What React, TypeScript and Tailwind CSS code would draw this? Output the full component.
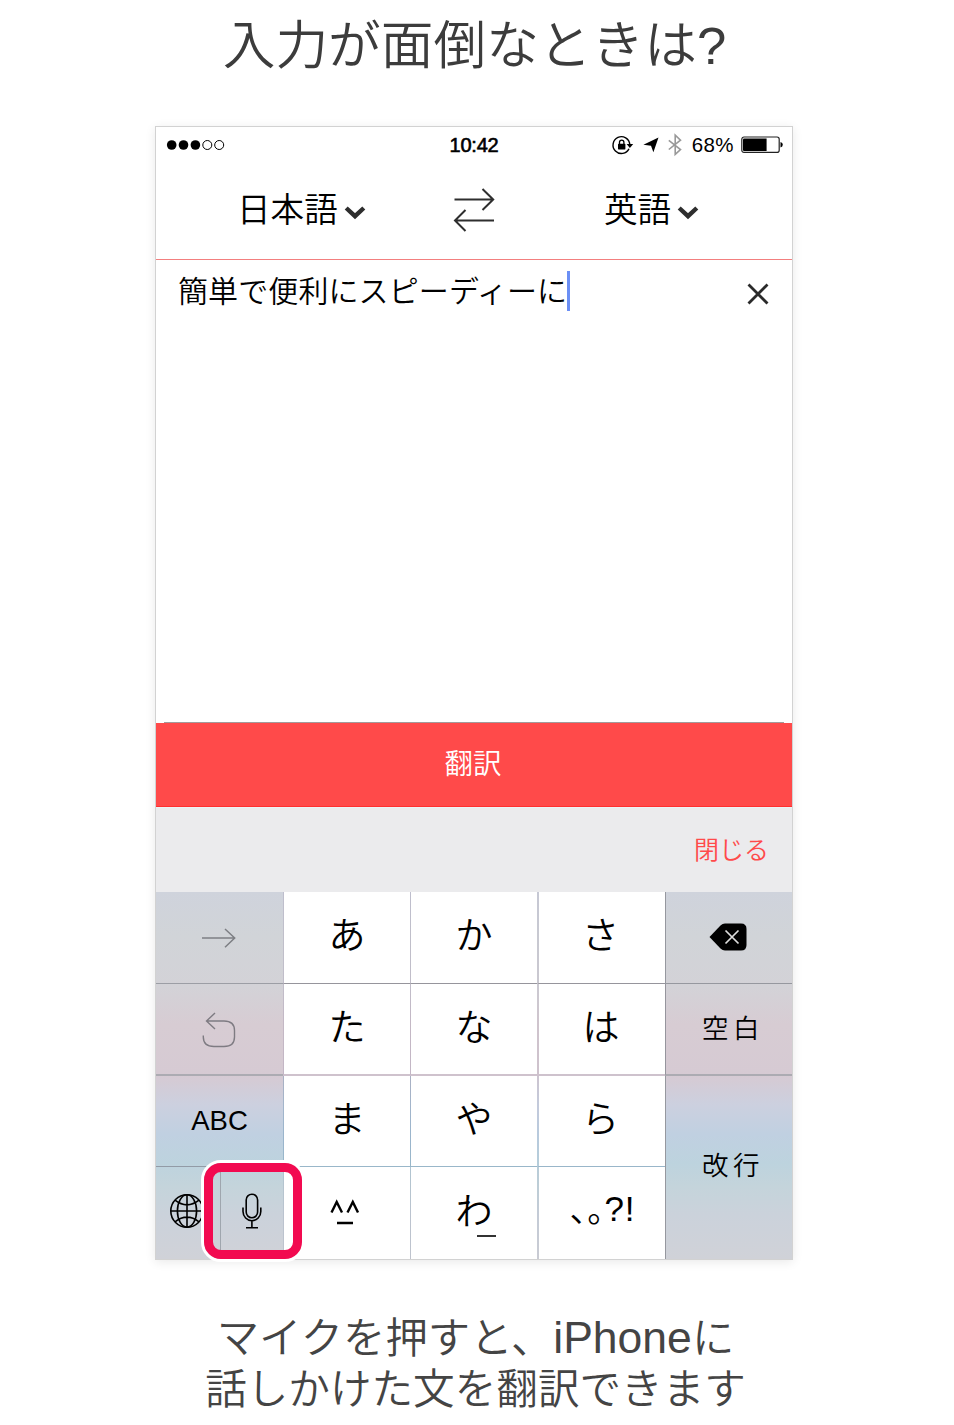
import React from "react";

const jp = "font-['Noto_Sans_CJK_JP',sans-serif] font-[350]";
const mixed = "font-['Liberation_Sans','Noto_Sans_CJK_JP',sans-serif]";

function StatusBar() {
  return (
    <div className="grid h-[38px] grid-cols-[1fr_auto_1fr] items-center pb-[2px] pl-[10px] pr-[9px] font-['Liberation_Sans',sans-serif] text-black">
      <svg width="60" height="12" viewBox="0 0 60 12">
        <g fill="#000">
          <circle cx="5.7" cy="6" r="4.8" />
          <circle cx="17.5" cy="6" r="4.8" />
          <circle cx="29.4" cy="6" r="4.8" />
        </g>
        <g fill="none" stroke="#000" strokeWidth="1">
          <circle cx="41.3" cy="6" r="4.5" />
          <circle cx="53.2" cy="6" r="4.5" />
        </g>
      </svg>
      <span className="pr-px text-[20px] leading-none tracking-[-0.2px] [-webkit-text-stroke:0.6px_#000]">10:42</span>
      <div className="flex items-center justify-end">
        <svg width="80" height="24" viewBox="0 0 80 24" className="mr-px">
          <path d="M18 15.7A8.4 8.4 0 1 1 18.8 11.4" fill="none" stroke="#000" strokeWidth="1.4" />
          <path d="M15.6 11h6.6l-3.3 4z" fill="#000" />
          <rect x="7" y="10.8" width="7.4" height="5.6" rx="0.6" fill="#000" />
          <path d="M8.5 11V9.3a2.2 2.2 0 0 1 4.4 0V11" fill="none" stroke="#000" strokeWidth="1.3" />
          <path d="M47.5 4.6L42.4 19.3L40 12.8L32.4 11.7z" fill="#000" />
          <path d="M57.8 7.3L69.5 16.5L64.2 21.4V2.2L69.5 7.1L57.8 16.5" fill="none" stroke="#999" strokeWidth="1.6" />
        </svg>
        <span className="mr-[6px] text-[20.5px] leading-none tracking-[0.4px]">68%</span>
        <svg width="43" height="18" viewBox="0 0 43 18">
          <rect x="1.8" y="1" width="37.4" height="15.4" rx="2.2" fill="none" stroke="#222" strokeWidth="1.2" />
          <path d="M4 2.4H26.6V15H4Q3 15 3 14V3.4Q3 2.4 4 2.4z" fill="#000" />
          <path d="M40.5 6q2.3 0.6 2.3 2.7T40.5 11.4z" fill="#000" />
        </svg>
      </div>
    </div>
  );
}

function Chevron() {
  return (
    <svg width="22" height="15" viewBox="0 0 22 15" className="mt-[8px]">
      <path d="M2.2 3L11 11.2L19.8 3" fill="none" stroke="#2e2e2e" strokeWidth="4.4" />
    </svg>
  );
}

function Language({ name }: { name: string }) {
  return (
    <div className="flex items-center gap-[6px]">
      <span className={`${jp} text-[33.6px] leading-[40px] text-black`}>{name}</span>
      <Chevron />
    </div>
  );
}

function LanguageBar() {
  return (
    <div className="flex h-[95px] items-start border-b border-[#f37f7f] pl-[81px] pt-[23px]">
      <div className="w-[216px]">
        <Language name="日本語" />
      </div>
      <svg width="42" height="48" viewBox="0 0 42 48" className="-mt-[2px] mr-[109px]" fill="none" stroke="#2e2e2e" strokeWidth="2">
        <path d="M1.5 13.5H40M29.5 3L40.2 13.5L29.5 24" />
        <path d="M41 34.5H2.5M12.5 24L2 34.5L12.5 45" />
      </svg>
      <Language name="英語" />
    </div>
  );
}

function InputArea() {
  return (
    <div className="flex h-[462px] items-start justify-between pl-[22px] pr-[22px] pt-[11px]">
      <div className="flex">
        <span className={`${jp} -mt-[2px] text-[30px] leading-[40px] tracking-[0.1px] text-black`}>簡単で便利にスピーディーに</span>
        <span className="h-[40px] w-[3px] bg-[#6b8ff5]" />
      </div>
      <svg width="24" height="24" viewBox="0 0 24 24" className="mt-[11px]">
        <path d="M2.5 2.5L21.5 21.5M21.5 2.5L2.5 21.5" stroke="#2a2a2a" strokeWidth="2.8" />
      </svg>
    </div>
  );
}

const whiteKey = "flex items-center justify-center bg-white bg-clip-padding text-black";

function Kana({ text, line, className }: { text: string; line: string; className?: string }) {
  return (
    <div className={`${whiteKey} ${line}`}>
      <span className={`${jp} pb-[9px] text-[37px] leading-[40px] ${className ?? ""}`}>{text}</span>
    </div>
  );
}

const firstRow = "border-l border-b border-[#64508028] border-b-[#3c3c4666]";
const secondRow = "border-l border-b-2 border-[#64508028] border-b-[#64508010]";
const thirdRow = "border-l border-b border-[#4a78a050]";

function Keyboard() {
  return (
    <div className="grid h-[367px] grid-cols-[127px_127px_127px_128px_127px] grid-rows-[92px_92px_91px_92px] bg-[linear-gradient(180deg,#cfd3dc_0%,#d1d4d8_12%,#d3d2d7_26%,#d7ccd3_36%,#d6cad3_50%,#ccd0df_58%,#c0d0e1_66%,#bdd3de_74%,#c4d4db_80%,#cbd2db_88%,#d0d2d8_100%)]">
      <div className="flex items-center justify-center border-b border-[#9c9ea5] pr-[2px]">
        <svg width="36" height="22" viewBox="0 0 36 22" fill="none" stroke="#7d7f84" strokeWidth="1.5">
          <path d="M1 11H33.5M24 2L33.7 11L24 20.2" />
        </svg>
      </div>
      <Kana text="あ" line={firstRow} />
      <Kana text="か" line={firstRow} />
      <Kana text="さ" line="border-l-2 border-b border-[#64508014] border-b-[#3c3c4666]" className="pr-[3px]" />
      <div className="flex items-center justify-center border-b border-l border-[#96989f] pb-[2px] pr-[2px]">
        <svg width="38" height="28" viewBox="0 0 38 28">
          <path d="M0.5 14L11.5 2.5Q13.5 0.5 16 0.5H32Q37.5 0.5 37.5 6V22Q37.5 27.5 32 27.5H16Q13.5 27.5 11.5 25.5z" fill="#000" />
          <path d="M16.5 7.5L29.5 20.5M29.5 7.5L16.5 20.5" stroke="#ddd" strokeWidth="1.7" />
        </svg>
      </div>

      <div className="flex items-center justify-center border-b-2 border-[#acabb2] pr-[2px] pt-[2px]">
        <svg width="34" height="36" viewBox="0 0 34 36" fill="none" stroke="#7e7b82" strokeWidth="1.4">
          <path d="M13 1L4.5 9L13 17M4.5 9H22Q32.5 9 32.5 18.5V25Q32.5 34.5 22 34.5H12Q1.3 34.5 1.3 25V23.5" />
        </svg>
      </div>
      <Kana text="た" line={secondRow} />
      <Kana text="な" line={secondRow} />
      <Kana text="は" line="border-l-2 border-b-2 border-[#64508010]" className="pr-[2px]" />
      <div className="flex items-center justify-center border-b-2 border-l border-[#acabb2] border-l-[#96959d]">
        <span className={`${jp} pb-[5px] pl-[8px] text-[26.5px] leading-[36px] tracking-[4.5px] text-black`}>空白</span>
      </div>

      <div className="flex items-center justify-center border-b border-[#929ba6] pb-px">
        <span className="font-['Liberation_Sans',sans-serif] text-[27.5px] leading-[32px] text-black">ABC</span>
      </div>
      <Kana text="ま" line={thirdRow} />
      <Kana text="や" line={thirdRow} />
      <Kana text="ら" line="border-l-2 border-b border-[#4a78a010] border-b-[#4a78a050]" className="pr-[3px]" />
      <div className="row-span-2 flex items-center justify-center border-l border-[#96989f]">
        <span className={`${jp} pb-[8px] pl-[8px] text-[26.5px] leading-[36px] tracking-[4.5px] text-black`}>改行</span>
      </div>

      <div className="relative flex">
        <div className="flex w-[65px] items-center border-r border-[#9fa6ae] pb-[5px] pl-[14px]">
          <svg width="34" height="36" viewBox="0 0 34 36" fill="none" stroke="#000" strokeWidth="1.6">
            <circle cx="17" cy="18" r="16.2" />
            <ellipse cx="17" cy="18" rx="9.6" ry="16.2" />
            <path d="M17 2V34M1 18H33M5 7.2Q17 16.5 29 7.2M5 28.8Q17 19.5 29 28.8" />
          </svg>
        </div>
        <div className="flex flex-1 items-center justify-center pb-[5px]">
          <svg width="20" height="36" viewBox="0 0 20 36" fill="none" stroke="#000" strokeWidth="1.6">
            <rect x="4.2" y="1.2" width="11.4" height="23.6" rx="5.7" />
            <path d="M1 14.5V18.5A8.9 9.2 0 0 0 18.8 18.5V14.5M9.9 27.7V34.5M4 34.7H16" />
          </svg>
        </div>
        <div className="absolute left-[45px] top-[-7px] h-[102px] w-[104px] rounded-[20px] border-[3px] border-white">
          <div className="h-full w-full rounded-[17px] border-[9px] border-[#f20a50]" />
        </div>
      </div>
      <div className={`${whiteKey} border-l border-[#64709028]`}>
        <svg width="30" height="26" viewBox="0 0 30 26" fill="none" stroke="#000" strokeWidth="2.4" className="mb-[2px] mr-[5px]">
          <path d="M1.5 13.5L6.7 3L12 13.5M17.5 13.5L22.8 3L28 13.5M7 24H23" />
        </svg>
      </div>
      <div className={`${whiteKey} relative border-l border-[#64709028]`}>
        <span className={`${jp} pb-[9px] text-[37px] leading-[40px]`}>わ</span>
        <span className="absolute bottom-[22px] left-[66px] h-[2px] w-[19px] bg-[#333]" />
      </div>
      <div className={`${whiteKey} border-l-2 border-[#64709010]`}>
        <span className={`${jp} flex pb-[9px] pl-[2px] text-[34px] leading-[40px]`}>
          <span>､｡</span>
          <span className="font-['Liberation_Sans',sans-serif] pt-px text-[35px] tracking-[1px] font-normal">?!</span>
        </span>
      </div>
    </div>
  );
}

export default function App() {
  return (
    <main className="flex h-[1425px] w-[954px] flex-col items-center overflow-hidden bg-white">
      <h1 className={`${mixed} h-[126px] pr-[5px] pt-[16px] text-[52.7px] font-[350] leading-[60px] text-[#3c3c3c]`}>入力が面倒なときは?</h1>
      <section className="mr-[6px] h-[1134px] w-[638px] shrink-0 border border-[#d2d2d2] bg-white shadow-[0_2px_10px_rgba(0,0,0,0.09)]">
        <StatusBar />
        <LanguageBar />
        <InputArea />
        <div className="mx-[8px] h-px bg-[#a39a9a]" />
        <div className="flex h-[84px] items-center justify-center border-b border-[#ff2f2f] bg-[#ff4a4a] pb-[6px] pr-[2px]">
          <span className={`${jp} text-[28.5px] leading-[36px] text-white`}>翻訳</span>
        </div>
        <div className="flex h-[85px] items-center justify-end border-t border-[#ebf3f5] bg-[#ebebed] pb-[4px] pr-[23px]">
          <span className={`${jp} text-[25px] leading-[36px] text-[#ff4a4a]`}>閉じる</span>
        </div>
        <Keyboard />
      </section>
      <p className={`${mixed} pr-[3px] pt-[53px] text-center text-[41.6px] font-[350] leading-[51px] text-[#444]`}>
        <span className="text-[42.4px]">
          マイクを押すと、<span className="text-[44.5px] leading-none">iPhone</span>に
        </span>
        <br />
        話しかけた文を翻訳できます
      </p>
    </main>
  );
}
